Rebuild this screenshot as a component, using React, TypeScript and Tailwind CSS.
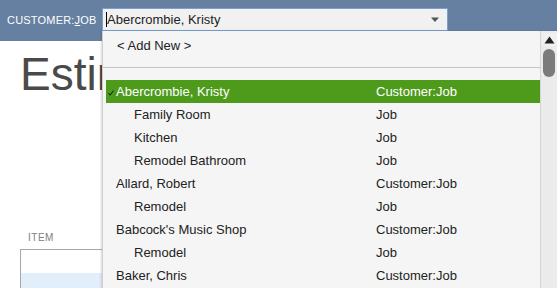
const rows = [
  { name: "Abercrombie, Kristy", type: "Customer:Job", child: false, selected: true },
  { name: "Family Room", type: "Job", child: true },
  { name: "Kitchen", type: "Job", child: true },
  { name: "Remodel Bathroom", type: "Job", child: true },
  { name: "Allard, Robert", type: "Customer:Job", child: false },
  { name: "Remodel", type: "Job", child: true },
  { name: "Babcock's Music Shop", type: "Customer:Job", child: false },
  { name: "Remodel", type: "Job", child: true },
  { name: "Baker, Chris", type: "Customer:Job", child: false },
];

export default function App() {
  return (
    <div
      className="relative w-[557px] h-[288px] overflow-hidden bg-white text-[13px] text-[#222]"
      style={{ fontFamily: '"Liberation Sans", Arial, sans-serif' }}
    >
      {/* Header bar */}
      <div className="h-[41px] bg-[#6580a1] flex items-center pl-[7px]">
        <span className="text-[11px] text-white tracking-[0.2px]">
          CUSTOMER:<span className="underline">J</span>OB
        </span>
      </div>

      {/* Page body, clipped where the dropdown covers it */}
      <div className="w-[102px] overflow-hidden pl-[20px]">
        <h1 className="mt-[10px] text-[46px] leading-[46px] text-[#4a4a4a] font-normal whitespace-nowrap">
          Estim
        </h1>
        <div className="mt-[133px] pl-[8px] text-[10px] text-[#808080] tracking-[0.5px]">
          ITEM
        </div>
        <div className="mt-[4px] w-[120px] border-t border-l border-[#a8a8a8]">
          <div className="h-[23px] bg-white" />
          <div className="h-[23px] bg-[#e3eefb]" />
        </div>
      </div>

      {/* Combo box */}
      <div className="absolute left-[102px] top-[8px] w-[346px] h-[23px] border border-[#7aa0cf] bg-[#f1f1f1] flex items-center pl-[3px] pr-[6px]">
        <span className="w-px h-[15px] bg-black" />
        <span className="flex-1">Abercrombie, Kristy</span>
        <svg width="10" height="6" viewBox="0 0 10 6" className="mr-[1px]">
          <path d="M1 0.5 L9 0.5 L5 5 Z" fill="#555" />
        </svg>
      </div>

      {/* Dropdown list */}
      <div className="absolute left-[102px] top-[31px] right-0 bottom-0 bg-[#f5f5f5] border-l border-[#cfcfcf] shadow-[-1px_0_2px_rgba(0,0,0,0.15)] flex">
        <div className="flex-1">
          <div className="h-[30px] pl-[14px] flex items-center">&lt; Add New &gt;</div>
          <div className="mt-[6px] h-px bg-[#c4c4c4]" />
          <div className="mt-[12px] pl-[3px]">
            {rows.map((row, i) => (
              <div
                key={i}
                className={`h-[23px] flex items-center ${
                  row.selected ? "bg-[#4e9b1b] text-white" : ""
                }`}
              >
                <span className="w-[10px] shrink-0 flex items-center pl-[2px] pt-[3px]">
                  {row.selected && (
                    <svg width="6" height="6" viewBox="0 0 6 6">
                      <path d="M0.5 3 L2.2 5.2 L5.5 0.5" stroke="#111" strokeWidth="1" fill="none" />
                    </svg>
                  )}
                </span>
                <span className={`w-[260px] shrink-0 ${row.child ? "pl-[18px]" : ""}`}>
                  {row.name}
                </span>
                <span>{row.type}</span>
              </div>
            ))}
          </div>
        </div>

        {/* Scrollbar */}
        <div className="w-[17px] border-l border-[#d6d6d6] bg-[#ebebeb] flex flex-col items-center">
          <div className="mt-[2px] h-[13px] w-[15px] flex items-center justify-center bg-[#f0f0f0]">
            <svg width="11" height="8" viewBox="0 0 11 8">
              <path d="M5.5 0.5 L10.5 7.5 L0.5 7.5 Z" fill="#222" />
            </svg>
          </div>
          <div className="mt-[3px] w-[12px] h-[28px] rounded-full bg-[#7b7b7b]" />
        </div>
      </div>
    </div>
  );
}
